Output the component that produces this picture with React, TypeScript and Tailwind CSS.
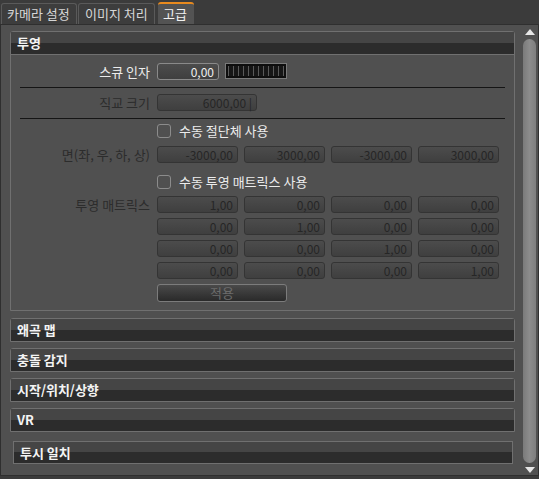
const font = "font-['Noto_Sans_CJK_KR','Noto_Sans',sans-serif]";

const faceValues = ["-3000,00", "3000,00", "-3000,00", "3000,00"];
const matrix = [
  ["1,00", "0,00", "0,00", "0,00"],
  ["0,00", "1,00", "0,00", "0,00"],
  ["0,00", "0,00", "1,00", "0,00"],
  ["0,00", "0,00", "0,00", "1,00"],
];

const collapsed = ["왜곡 맵", "충돌 감지", "시작/위치/상향", "VR"];

function Field({ value, width = "w-[81px]", enabled = false }: { value: string; width?: string; enabled?: boolean }) {
  return (
    <div
      className={`${width} h-[17px] rounded-[3px] border bg-gradient-to-b from-[#4c4c4c] to-[#3f3f3f] pr-[4px] text-right text-[12px] leading-[15px] ${
        enabled ? "border-[#8a8a8a] text-[#f0f0f0]" : "border-[#343434] text-[#262626]"
      }`}
    >
      {value}
    </div>
  );
}

function Row({ label, dim = false, children }: { label: string; dim?: boolean; children: React.ReactNode }) {
  return (
    <div className="flex items-center">
      <div className={`w-[140px] pr-[1px] text-right text-[13px] leading-[17px] ${dim ? "text-[#2c2c2c]" : "text-[#ececec]"}`}>
        {label}
      </div>
      <div className="ml-[6px] flex gap-[6px]">{children}</div>
    </div>
  );
}

function Check({ label }: { label: string }) {
  return (
    <div className="ml-[146px] flex h-[14px] items-center gap-[8px]">
      <div className="h-[14px] w-[14px] rounded-[3px] border border-[#8c8c8c]" />
      <span className="text-[13px] leading-[14px] text-[#ececec]">{label}</span>
    </div>
  );
}

function Header({ title, h = "h-[22px]", top = "h-[11px]" }: { title: string; h?: string; top?: string }) {
  return (
    <div className={`flex ${h} flex-col`}>
      <div className={`${top} bg-[#454545]`} />
      <div className="flex-1 bg-[#2c2c2c]" />
      <span className="absolute left-[6px] top-[2px] text-[13px] font-bold leading-[18px] text-[#f4f4f4]">{title}</span>
    </div>
  );
}

export default function App() {
  return (
    <div className={`${font} flex h-[479px] w-[539px] flex-col overflow-hidden bg-[#3b3b3b]`}>
      {/* tabs */}
      <div className="flex h-[24px] items-end gap-[1px] pl-[1px]">
        <div className="flex h-[21px] w-[76px] items-center rounded-t-[3px] border border-b-0 border-[#5a5a5a] bg-[#3d3d3d] pl-[5px] text-[13px] text-[#d6d6d6]">
          카메라 설정
        </div>
        <div className="flex h-[21px] w-[77px] items-center rounded-t-[3px] border border-b-0 border-[#5a5a5a] bg-[#3d3d3d] pl-[6px] text-[13px] text-[#d6d6d6]">
          이미지 처리
        </div>
        <div className="ml-[2px] flex h-[22px] w-[36px] items-center rounded-t-[3px] border-t-2 border-[#e88a1e] bg-[#535353] pl-[5px] text-[13px] text-[#f2f2f2]">
          고급
        </div>
      </div>

      {/* panel */}
      <div className="flex h-[452px] border border-[#2f2f2f] bg-[#505050]">
        <div className="flex flex-1 flex-col pl-[9px] pt-[6px]">
          {/* 투영 */}
          <div className="relative w-[505px] rounded-t-[3px] border border-[#707070]">
            <div className="border-b border-[#707070]">
              <Header title="투영" />
            </div>
            <div className="flex flex-col pb-[8px]">
              <div className="mt-[8px]">
                <Row label="스큐 인자">
                  <Field value="0,00" width="w-[62px]" enabled />
                  <div className="h-[16px] w-[62px] border border-[#7a7a7a] bg-[#0e0e0e] p-[2px]">
                    <div className="h-full w-full bg-[repeating-linear-gradient(90deg,#5a5a5a_0px,#5a5a5a_1px,#161616_1px,#161616_5px)]" />
                  </div>
                </Row>
              </div>
              <div className="mx-[9px] mt-[7px] h-[1px] bg-[#151515]" />
              <div className="mt-[6px]">
                <Row label="직교 크기" dim>
                  <Field value="6000,00 |" width="w-[100px]" />
                </Row>
              </div>
              <div className="mx-[9px] mt-[7px] h-[1px] bg-[#151515]" />
              <div className="mt-[5px]">
                <Check label="수동 절단체 사용" />
              </div>
              <div className="mt-[8px]">
                <Row label="면(좌, 우, 하, 상)" dim>
                  {faceValues.map((v, i) => (
                    <Field key={i} value={v} />
                  ))}
                </Row>
              </div>
              <div className="mt-[12px]">
                <Check label="수동 투영 매트릭스 사용" />
              </div>
              <div className="mt-[7px] flex flex-col gap-[5px]">
                {matrix.map((row, r) => (
                  <Row key={r} label={r === 0 ? "투영 매트릭스" : ""} dim>
                    {row.map((v, i) => (
                      <Field key={i} value={v} />
                    ))}
                  </Row>
                ))}
              </div>
              <div className="ml-[146px] mt-[5px] flex h-[18px] w-[130px] items-center justify-center rounded-[3px] border border-[#7c7c7c] bg-gradient-to-b from-[#4a4a4a] to-[#2a2a2a] text-[13px] text-[#6c6c6c]">
                적용
              </div>
            </div>
          </div>

          {/* collapsed sections */}
          <div className="mt-[7px] flex flex-col gap-[6px]">
            {collapsed.map((t) => (
              <div key={t} className="relative w-[505px] rounded-t-[3px] border border-[#707070]">
                <Header title={t} />
              </div>
            ))}
          </div>
          <div className="relative ml-[3px] mt-[9px] w-[500px] border border-[#707070]">
            <Header title="투시 일치" h="h-[21px]" top="h-[10px]" />
          </div>
        </div>

        {/* scrollbar */}
        <div className="flex w-[16px] flex-col items-center pt-[4px] pr-[1px]">
          <svg width="10" height="6" viewBox="0 0 10 6">
            <polygon points="5,0 10,6 0,6" fill="#e6e6e6" />
          </svg>
          <div className="mt-[4px] h-[424px] w-[13px] rounded-full bg-gradient-to-r from-[#7a7a7a] via-[#8c8c8c] to-[#7e7e7e]" />
          <svg className="mt-[4px]" width="10" height="6" viewBox="0 0 10 6">
            <polygon points="0,0 10,0 5,6" fill="#e6e6e6" />
          </svg>
        </div>
      </div>
    </div>
  );
}
